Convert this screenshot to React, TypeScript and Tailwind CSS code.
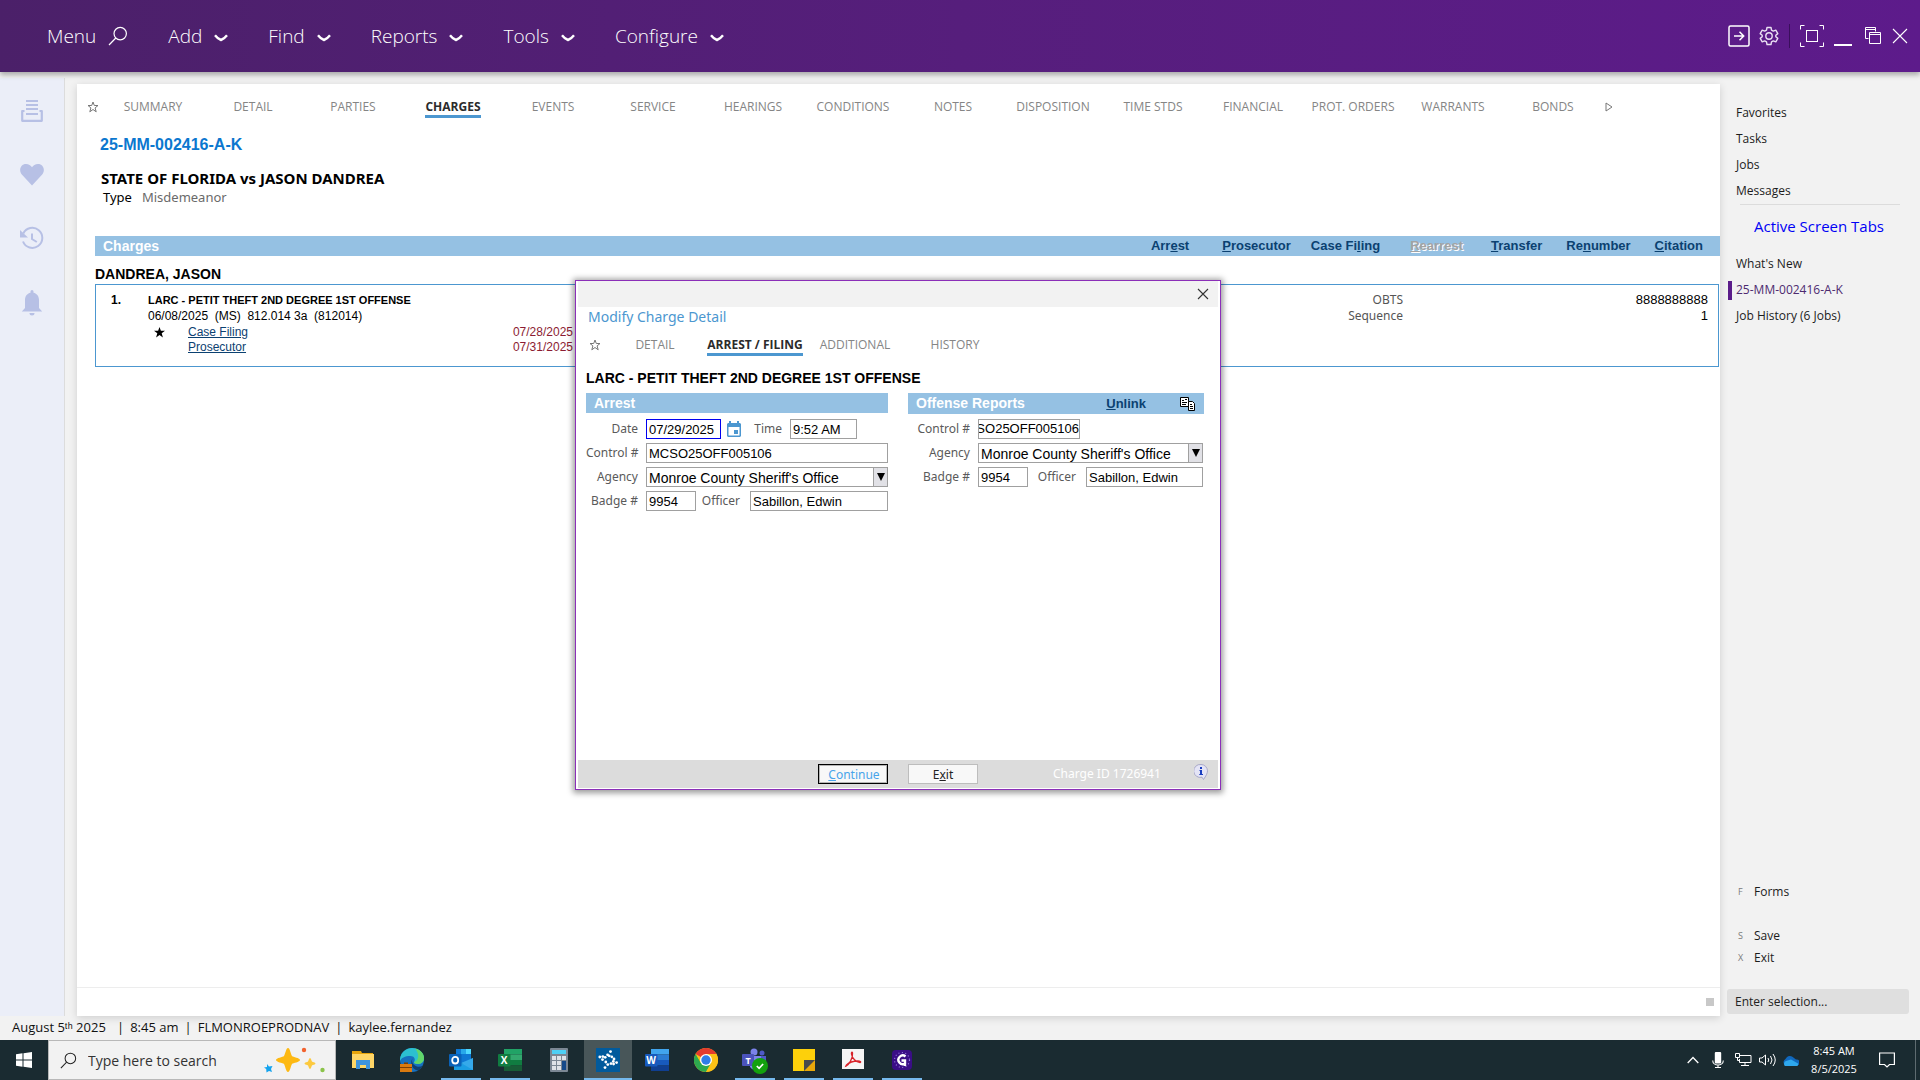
import React from "react";

const ui = "font-['Open_Sans',sans-serif]";
const arial = "font-['Liberation_Sans',sans-serif]";
const tahoma = "font-['Noto_Sans',sans-serif]";

const menus = ["Add", "Find", "Reports", "Tools", "Configure"];
const caseTabs = [
  "SUMMARY", "DETAIL", "PARTIES", "CHARGES", "EVENTS", "SERVICE", "HEARINGS", "CONDITIONS",
  "NOTES", "DISPOSITION", "TIME STDS", "FINANCIAL", "PROT. ORDERS", "WARRANTS", "BONDS",
];
const dialogTabs = ["DETAIL", "ARREST / FILING", "ADDITIONAL", "HISTORY"];

function Magnifier({ className }: { className: string }) {
  return (
    <svg viewBox="0 0 20 20" className={className} fill="none" stroke="currentColor" strokeWidth="1.2">
      <circle cx="12.2" cy="7.6" r="6.2" />
      <path d="M7.8 12 1 19" />
    </svg>
  );
}

function StarOutline() {
  return (
    <svg viewBox="0 0 12 12" className="h-3 w-3" fill="none" stroke="#777" strokeWidth="1">
      <path d="M6 1 7.3 4.5H11L8.1 6.9 9.2 10.8 6 8.5 2.8 10.8 3.9 6.9 1 4.5H4.7Z" />
    </svg>
  );
}

function Tabs({ items, active, label }: { items: string[]; active: string; label: string }) {
  return (
    <nav aria-label={label} className={`flex items-start ${ui} text-[12px] leading-[17px]`}>
      {items.map((t) => (
        <button key={t} type="button" className="flex w-[100px] justify-center whitespace-nowrap">
          {t === active ? (
            <span className="border-b-[3px] border-[#4c97d0] font-bold text-[#2b2b2b]">{t}</span>
          ) : (
            <span className="text-[#858585]">{t}</span>
          )}
        </button>
      ))}
    </nav>
  );
}

function Header() {
  return (
    <header className={`relative z-10 flex h-[72px] items-center justify-between bg-linear-to-r from-[#4b2069] via-[#561e7c] to-[#5d1b8b] pl-[47px] pr-3 text-white shadow-[0_3px_5px_rgba(0,0,0,0.3)] ${ui}`}>
      <nav className="flex items-center gap-10 text-[19px] font-light leading-[26px]">
        <button type="button" className="flex items-center gap-3">
          Menu
          <Magnifier className="h-5 w-5" />
        </button>
        {menus.map((m) => (
          <button key={m} type="button" className="flex items-center gap-3">
            {m}
            <svg viewBox="0 0 14 8" className="mt-1 h-2 w-[14px]" fill="none" stroke="#fff" strokeWidth="2.4">
              <path d="M1 1.2Q4 5 7 6Q10 5 13 1.2" />
            </svg>
          </button>
        ))}
      </nav>
      <div className="flex items-center">
        <button type="button" aria-label="Sign out">
          <svg viewBox="0 0 24 24" className="h-6 w-6" fill="none" stroke="#fff" strokeWidth="1.5">
            <rect x="2" y="2" width="20" height="20" rx="1.5" />
            <path d="M7 12h9.5M12.5 7.8l4.2 4.2-4.2 4.2" />
          </svg>
        </button>
        <button type="button" aria-label="Settings" className="ml-2">
          <svg viewBox="0 0 20 20" className="h-5 w-5" fill="none" stroke="#e9dff2" strokeWidth="1.4" strokeLinejoin="round">
            <path d="M8 1.5h4l.5 2.6 1.8 1 2.5-.9 2 3.4-2 1.7v1.4l2 1.7-2 3.4-2.5-.9-1.8 1-.5 2.6H8l-.5-2.6-1.8-1-2.5.9-2-3.4 2-1.7V9.3l-2-1.7 2-3.4 2.5.9 1.8-1Z" />
            <circle cx="10" cy="10" r="3.2" />
          </svg>
        </button>
        <span className="ml-2.5 h-6 w-px bg-[#3a0f5c]" />
        <button type="button" aria-label="Full screen" className="ml-2.5">
          <svg viewBox="0 0 24 22" className="h-[22px] w-6" fill="none" stroke="#fff" strokeWidth="1">
            <path d="M.5 4.5v-4h4M19.5.5h4v4M23.5 17.5v4h-4M4.5 21.5h-4v-4" />
            <rect x="6.5" y="5.5" width="11" height="11" />
          </svg>
        </button>
        <button type="button" aria-label="Minimize" className="ml-2.5 flex h-5 w-[18px] items-end">
          <span className="h-0.5 w-full bg-white" />
        </button>
        <button type="button" aria-label="Restore" className="ml-3">
          <svg viewBox="0 0 18 18" className="h-[18px] w-[18px]" fill="none" stroke="#fff" strokeWidth="1">
            <path d="M4.5 11.5H1.5v-11h10v4M1.5 2.5h10" />
            <path d="M5.5 5.5h11v11h-11ZM5.5 7.5h11" />
          </svg>
        </button>
        <button type="button" aria-label="Close" className="ml-2.5">
          <svg viewBox="0 0 16 16" className="h-4 w-4" fill="none" stroke="#fff" strokeWidth="1.1">
            <path d="M1 1l14 14M15 1 1 15" />
          </svg>
        </button>
      </div>
    </header>
  );
}

function Rail() {
  return (
    <aside className="mt-1.5 flex w-[65px] shrink-0 flex-col items-center gap-10 border-r border-[#dcdcdc] bg-[#ebeef8] pt-5 text-[#b7c0e5]">
      <button type="button" aria-label="Documents">
        <svg viewBox="0 0 24 24" className="h-6 w-6" fill="none" stroke="currentColor">
          <path d="M6 3h12M6 7h12M6 11h12M6 16h12" strokeWidth="2" />
          <path d="M4.5 13H2.2v9.8h19.6V13h-2.3" strokeWidth="2.2" strokeLinejoin="round" />
        </svg>
      </button>
      <button type="button" aria-label="Favorites">
        <svg viewBox="0 0 24 24" className="h-6 w-6" fill="currentColor">
          <path d="M12 23.5 1.8 12.6C-1.7 8 .7 2 6 2c2.7 0 4.8 1.4 6 3.3C13.2 3.4 15.3 2 18 2c5.3 0 7.7 6 4.2 10.6Z" />
        </svg>
      </button>
      <button type="button" aria-label="History">
        <svg viewBox="0 0 24 24" className="h-6 w-6" fill="none" stroke="currentColor" strokeWidth="2">
          <path d="M3 15.5A10 10 0 1 0 3.3 7.5" />
          <path d="M0 4v7.5h8Z" fill="currentColor" stroke="none" />
          <path d="M12 7.5v5.5l4.8 3" />
        </svg>
      </button>
      <button type="button" aria-label="Notifications">
        <svg viewBox="0 0 24 26" className="h-[26px] w-6" fill="currentColor">
          <path d="M10.5 1.5a1.5 1.5 0 0 1 3 0v1.3c3.5.7 5.5 3.7 5.5 7.2v8l3.2 3.5H1.8L5 18v-8c0-3.5 2-6.5 5.5-7.2ZM9.5 23h5a2.5 2.5 0 0 1-5 0Z" />
        </svg>
      </button>
    </aside>
  );
}

function ChargesBar() {
  const link = "whitespace-nowrap";
  return (
    <div className={`flex h-5 items-center bg-[#95c1e3] pl-2 pr-[17px] ${arial} font-bold text-[#0b4171]`}>
      <h2 className="mr-auto text-[14px] text-white">Charges</h2>
      <div className="flex text-[13px] leading-5">
        <button type="button" className={link}>Arr<u>e</u>st</button>
        <button type="button" className={`ml-[33px] ${link}`}><u>P</u>rosecutor</button>
        <button type="button" className={`ml-5 ${link}`}>Case Fi<u>l</u>ing</button>
        <button type="button" disabled className={`ml-[30px] text-[#a3a3a3] [text-shadow:1px_1px_0_#fff] ${link}`}><u>R</u>earrest</button>
        <button type="button" className={`ml-7 ${link}`}><u>T</u>ransfer</button>
        <button type="button" className={`ml-6 ${link}`}>Re<u>n</u>umber</button>
        <button type="button" className={`ml-6 ${link}`}><u>C</u>itation</button>
      </div>
    </div>
  );
}

function ChargeRow() {
  return (
    <section className={`mr-px flex h-[83px] border border-[#4c97d0] pl-[15px] pr-[10px] pt-[7px] ${arial} text-[12px] leading-4 text-black`}>
      <span className="w-[37px] shrink-0 font-bold">1.</span>
      <div className="w-[425px] shrink-0">
        <h3 className="text-[11px] font-bold whitespace-nowrap">LARC - PETIT THEFT 2ND DEGREE 1ST OFFENSE</h3>
        <p className="mb-px whitespace-pre">06/08/2025  (MS)  812.014 3a  (812014)</p>
        <div className="flex leading-[15px]">
          <span className="w-10 pl-1.5">
            <svg viewBox="0 0 12 12" className="mt-0.5 h-[11px] w-[11px]">
              <path d="M6 0 7.5 4.2H12L8.4 6.9 9.7 11.5 6 8.8 2.3 11.5 3.6 6.9 0 4.2H4.5Z" />
            </svg>
          </span>
          <a href="#case-filing" className="text-[#0b4171] underline">Case Filing</a>
          <span className="ml-auto text-[#8c1c32]">07/28/2025</span>
        </div>
        <div className="flex pl-10 leading-[15px]">
          <a href="#prosecutor" className="text-[#0b4171] underline">Prosecutor</a>
          <span className="ml-auto text-[#8c1c32]">07/31/2025</span>
        </div>
      </div>
      <dl className="ml-auto grid grid-cols-[auto_305px] content-start text-right">
        <dt className={`${tahoma} text-[#555]`}>OBTS</dt>
        <dd className="text-[13px]">8888888888</dd>
        <dt className={`${tahoma} text-[#555]`}>Sequence</dt>
        <dd className="text-[13px]">1</dd>
      </dl>
    </section>
  );
}

const box = `h-5 border border-[#a0a0a0] bg-white px-0.5 text-[13px] text-black ${arial} outline-none`;
const lab = `${tahoma} text-[12px] text-[#5a5a5a] text-right whitespace-nowrap`;

function AgencySelect({ id }: { id: string }) {
  return (
    <div className="relative flex w-full">
      <select id={id} className={`h-5 w-full appearance-none border border-[#a0a0a0] bg-white px-0.5 text-[14px] text-black outline-none ${arial}`} defaultValue="m">
        <option value="m">Monroe County Sheriff's Office</option>
      </select>
      <span className="pointer-events-none absolute inset-y-px right-px flex w-[14px] items-center justify-center border-l border-[#a0a0a0] bg-[#e1e1e6]">
        <svg viewBox="0 0 8 8" className="h-2 w-2"><path d="M0 0h8L4 8Z" /></svg>
      </span>
    </div>
  );
}

function ArrestForm() {
  return (
    <section className="w-[302px]">
      <h3 className={`h-5 bg-[#95c1e3] pl-2 text-[14px] font-bold leading-5 text-white ${arial}`}>Arrest</h3>
      <div className="mt-1.5 grid grid-cols-[52px_242px] items-center gap-x-2 gap-y-1">
        <label htmlFor="date" className={lab}>Date</label>
        <div className="flex items-center">
          <input id="date" className={`h-5 w-[75px] border border-[#0000f0] bg-white px-0.5 text-[13px] text-black outline-none ${arial}`} defaultValue="07/29/2025" />
          <button type="button" aria-label="Pick date" className="ml-1.5">
            <svg viewBox="0 0 14 16" className="h-4 w-[14px]">
              <path d="M2 0h2v2h6V0h2v2h1l1 1v12l-1 1H1l-1-1V3l1-1h1Z" fill="#4c97d0" />
              <path d="M1.5 6h11v8.5h-11Z" fill="#fff" />
              <path d="M7 9h4v4H7Z" fill="#4c97d0" />
            </svg>
          </button>
          <label htmlFor="time" className={`mr-2 ml-auto ${lab}`}>Time</label>
          <input id="time" className={`${box} mr-[31px] w-[67px]`} defaultValue="9:52 AM" />
        </div>
        <label htmlFor="ctl" className={lab}>Control #</label>
        <input id="ctl" className={box} defaultValue="MCSO25OFF005106" />
        <label htmlFor="agency" className={lab}>Agency</label>
        <AgencySelect id="agency" />
        <label htmlFor="badge" className={lab}>Badge #</label>
        <div className="flex items-center">
          <input id="badge" className={`${box} w-[50px]`} defaultValue="9954" />
          <label htmlFor="officer" className={`ml-auto mr-2.5 ${lab}`}>Officer</label>
          <input id="officer" className={`${box} w-[138px]`} defaultValue="Sabillon, Edwin" />
        </div>
      </div>
    </section>
  );
}

function OffenseForm() {
  return (
    <section className="w-[296px]">
      <div className={`flex h-[21px] items-center bg-[#95c1e3] pl-2 pr-2 font-bold ${arial}`}>
        <h3 className="mr-auto text-[14px] text-white">Offense Reports</h3>
        <button type="button" className="mr-[34px] text-[13px] text-[#0b4171]"><u>U</u>nlink</button>
        <button type="button" aria-label="Copy">
          <svg viewBox="0 0 16 16" className="h-4 w-4" fill="#fff" stroke="#000" strokeWidth="1">
            <path d="M.5 1.5h8v9h-8Z" />
            <path d="M2 4.5h2M5 3.5h2M2 6.5h5M2 8.5h4" />
            <path d="M8.5 5.5h4l2 2v7h-6Z" />
            <path d="M10 8.5h2M10 10.5h3M10 12.5h3" />
          </svg>
        </button>
      </div>
      <div className="mt-[5px] grid grid-cols-[62px_225px] items-center gap-x-2 gap-y-1">
        <label htmlFor="octl" className={lab}>Control #</label>
        <div className="flex h-5 w-[102px] justify-end overflow-hidden border border-[#a0a0a0]">
          <input id="octl" className={`w-[128px] shrink-0 bg-white text-right text-[13px] leading-[18px] text-black outline-none ${arial}`} defaultValue="MCSO25OFF005106" />
        </div>
        <label htmlFor="oagency" className={lab}>Agency</label>
        <AgencySelect id="oagency" />
        <label htmlFor="obadge" className={lab}>Badge #</label>
        <div className="flex items-center">
          <input id="obadge" className={`${box} w-[50px]`} defaultValue="9954" />
          <label htmlFor="oofficer" className={`ml-auto mr-2.5 ${lab}`}>Officer</label>
          <input id="oofficer" className={`${box} w-[117px]`} defaultValue="Sabillon, Edwin" />
        </div>
      </div>
    </section>
  );
}

function ChargeDialog() {
  return (
    <div role="dialog" aria-label="Modify Charge Detail" className="absolute left-[498px] top-[196px] flex h-[510px] w-[646px] flex-col border border-[#8b2fb8] bg-white px-0.5 pb-px shadow-[0_1px_6px_2px_rgba(0,0,0,0.4)]">
      <div className="flex h-[26px] shrink-0 items-center justify-end bg-[#f2f2f2] pr-[9px]">
        <button type="button" aria-label="Close dialog">
          <svg viewBox="0 0 12 12" className="h-3 w-3" stroke="#333" strokeWidth="1.1"><path d="M1 1l10 10M11 1 1 11" /></svg>
        </button>
      </div>
      <h2 className={`pl-[10px] text-[14px] leading-[19px] text-[#4c97d0] ${tahoma}`}>Modify Charge Detail</h2>
      <div className="mt-[10px] flex pl-[11px]">
        <span className="flex w-4 pt-[3px]"><StarOutline /></span>
        <Tabs items={dialogTabs} active="ARREST / FILING" label="Charge sections" />
      </div>
      <h3 className={`mt-[13px] pl-2 text-[14px] font-bold leading-[18px] text-black ${arial}`}>LARC - PETIT THEFT 2ND DEGREE 1ST OFFENSE</h3>
      <div className="mt-1.5 flex items-start gap-5 pl-2">
        <ArrestForm />
        <OffenseForm />
      </div>
      <footer className={`mt-auto flex h-7 shrink-0 items-center justify-end bg-[#dcdcdc] pr-[10px] text-[12px] ${tahoma}`}>
        <button type="button" className="h-5 w-[70px] border border-black bg-[#f8f8f8] pt-0.5 pl-0.5 leading-4 text-[#48a4ea] outline-1 -outline-offset-2 outline-[#b5b5b5]"><u>C</u>ontinue</button>
        <button type="button" className="ml-5 h-5 w-[70px] border border-[#bdbdbd] bg-[#f8f8f8] pt-px leading-4 text-[#222]">E<u>x</u>it</button>
        <span className="ml-[75px] w-[105px] whitespace-nowrap text-white">Charge ID 1726941</span>
        <svg viewBox="0 0 14 16" className="ml-9 mb-1 h-4 w-[14px]">
          <path d="M7 .5a6.5 6.5 0 0 1 6.5 6.3c0 2.7-1.5 5-4 8.7L8 13.2A6.5 6.5 0 1 1 7 .5Z" fill="#e4e4f6" stroke="#a9a9c8" />
          <path d="M6 3h2v2H6ZM5.5 6H8v4h1v1H5.3v-1H6V7h-.5Z" fill="#1a3ec0" />
        </svg>
      </footer>
    </div>
  );
}

function CasePanel() {
  return (
    <main className="relative ml-3 mt-3 flex min-w-0 flex-1 flex-col bg-white shadow-[0_2px_8px_rgba(0,0,0,0.15)]">
      <div className="flex pl-[10px] pt-[14px]">
        <span className="flex w-4 pt-[3px]"><StarOutline /></span>
        <Tabs items={caseTabs} active="CHARGES" label="Case sections" />
        <button type="button" aria-label="More tabs" className="ml-0.5 flex h-[17px] items-center">
          <svg viewBox="0 0 8 10" className="h-[10px] w-2" fill="none" stroke="#777"><path d="M1 1v8l6-4Z" /></svg>
        </button>
      </div>
      <h1 className={`mt-[17px] pl-[23px] text-[16px] font-bold leading-5 text-[#0b77cf] ${arial}`}>25-MM-002416-A-K</h1>
      <p className={`mt-[13px] pl-6 text-[15px] font-bold leading-5 text-black ${tahoma}`}>STATE OF FLORIDA vs JASON DANDREA</p>
      <p className={`flex gap-2.5 pl-[26px] text-[13px] leading-[18px] text-black ${tahoma}`}>Type <span className="text-[#6a6a6a]">Misdemeanor</span></p>
      <div className="mt-[30px] pl-[18px]">
        <ChargesBar />
        <h3 className={`mt-[9px] text-[14px] font-bold leading-[18px] text-black ${arial}`}>DANDREA, JASON</h3>
        <div className="mt-px"><ChargeRow /></div>
      </div>
      <div className="mt-auto flex h-[29px] items-center justify-end border-t border-[#ededed] pr-1.5">
        <span className="h-2 w-2 bg-[#c8c8c8]" />
      </div>
      <ChargeDialog />
    </main>
  );
}

function Side() {
  const row = "block leading-[26px] text-left";
  return (
    <aside className={`flex w-[200px] shrink-0 flex-col pt-7 text-[12px] text-[#1c1c1c] ${ui}`}>
      <nav className="pl-4">
        {["Favorites", "Tasks", "Jobs", "Messages"].map((t) => (
          <button key={t} type="button" className={row}>{t}</button>
        ))}
      </nav>
      <div className="ml-5 mr-5 border-t border-[#dcdcdc]" />
      <h2 className="mt-[10px] pl-[34px] text-[15px] leading-[22px] text-[#0000f5]">Active Screen Tabs</h2>
      <nav className="mt-[14px] pl-2">
        <button type="button" className={`${row} pl-2`}>What's New</button>
        <button type="button" className="flex h-[26px] items-center text-[#4d2a70]">
          <span className="mr-1 h-[19px] w-1 bg-[#5b1c8a]" />25-MM-002416-A-K
        </button>
        <button type="button" className={`${row} pl-2`}>Job History (6 Jobs)</button>
      </nav>
      <div className="mt-auto pl-[18px] leading-[22px]">
        {[["F", "Forms", "mb-[22px]"], ["S", "Save", ""], ["X", "Exit", ""]].map(([k, t, m]) => (
          <button key={t} type="button" className={`flex ${m}`}>
            <span className="w-4 text-left text-[9px] text-[#7a7a7a]">{k}</span>{t}
          </button>
        ))}
      </div>
      <input aria-label="Selection" placeholder="Enter selection..." className="mt-5 ml-[7px] mb-[2px] h-[25px] w-[182px] rounded-[3px] bg-[#dfdfdf] px-2 text-[12px] text-[#222] outline-none placeholder:text-[#222]" />
    </aside>
  );
}

function Explorer() {
  return (
    <svg viewBox="0 0 24 24" className="h-6 w-6">
      <path d="M1 3h9l1 2h11v15H1Z" fill="#e8a50c" />
      <path d="M1 6h22v14H1Z" fill="#ffd667" />
      <path d="M5 12h14v9h-4v-4H9v4H5Z" fill="#3f94dd" />
    </svg>
  );
}
function Edge() {
  return (
    <svg viewBox="0 0 24 24" className="h-6 w-6">
      <circle cx="12" cy="12" r="12" fill="#1670bf" />
      <path d="M0 11C1 4 6 0 12 0c7 0 12 5 12 10 0 4-3 6-6.5 6-2.5 0-4-1-3.5-2 2-3 0-6-3.5-6C5 8 1 10 0 13Z" fill="#2cc0d0" />
      <path d="M15 .5c6 1.5 9 5.500 9 9.5 0 4-3 6-6.500 6-2 0-3.500-.7-3.500-1.700C20 12 19 5 15 .5Z" fill="#62d66a" />
      <path d="M13 10c-2 2-1 7 4 8.5 2 .5 4 0 5.500-.7-1 2-3 4-5 4.700-6-1-8-9-4.500-12.500Z" fill="#123f70" />
      <path d="M0 16h12v8H0Z" fill="#d97a10" />
      <path d="M0 19h12v1H0ZM4 14.500h4v1.500H4Z" fill="#7a3d05" />
    </svg>
  );
}
function Office({ letter, tile, rows }: { letter: string; tile: string; rows: string[] }) {
  return (
    <svg viewBox="0 0 24 24" className="h-6 w-6">
      {rows.map((fill, i) => (
        <rect key={fill} x="6" y={1 + i * 5.5} width="18" height="5.5" fill={fill} />
      ))}
      <rect x="0" y="6" width="12.5" height="12.5" rx="1" fill={tile} />
      <text x="6.2" y="16" textAnchor="middle" fontSize="10" fontWeight="700" fill="#fff" fontFamily="Open Sans">{letter}</text>
    </svg>
  );
}
function Outlook() {
  return (
    <svg viewBox="0 0 24 24" className="h-6 w-6">
      <path d="M7 1h15v14H7Z" fill="#0f78d4" />
      <path d="M12 1h5v5h-5Z" fill="#28a8ea" />
      <path d="M17 1h5v5h-5Z" fill="#50d9ff" />
      <path d="M5 10l9 6 10-6v12H5Z" fill="#1b9de2" />
      <path d="M24 10v12L12 15Z" fill="#35a9ea" />
      <rect x="0" y="6" width="12.5" height="12.5" rx="1" fill="#0a62b8" />
      <ellipse cx="6.2" cy="12.2" rx="3" ry="3.3" fill="none" stroke="#fff" strokeWidth="1.8" />
    </svg>
  );
}
function Calculator() {
  return (
    <svg viewBox="0 0 24 24" className="h-6 w-6">
      <rect x="3" y="0" width="18" height="24" rx="1" fill="#7b8794" />
      <path d="M5 2h14v4H5Z" fill="#4ed0f5" />
      <path d="M5 8h4v4H5Zm5 0h4v4h-4Zm5 0h4v4h-4ZM5 13h4v4H5Zm5 0h4v4h-4ZM5 18h4v4H5Zm5 0h4v4h-4Z" fill="#dfe3e8" />
      <path d="M15 13h4v9h-4Z" fill="#164a8a" />
    </svg>
  );
}
function CaseApp() {
  const dots = [
    [14.5, 3.6], [11.6, 6.8], [9.2, 9.3], [6.5, 11.6], [3.8, 9], [9.8, 14], [11.8, 16.6],
    [9, 19.6], [15, 15.6], [17.3, 13.4], [20.6, 14.6], [18, 11], [15.8, 8.8], [13.2, 7.8], [6.8, 8.6], [17.6, 16],
  ];
  return (
    <svg viewBox="0 0 24 24" className="h-6 w-6">
      <path d="M0 0h24v24H0Z" fill="#015a9c" />
      {dots.map(([x, y]) => (
        <circle key={`${x}-${y}`} cx={x} cy={y} r="1.4" fill="#fff" />
      ))}
    </svg>
  );
}
function Chrome() {
  return (
    <svg viewBox="0 0 24 24" className="h-6 w-6">
      <circle cx="12" cy="12" r="12" fill="#fbc116" />
      <path d="M12 12 1.6 6A12 12 0 0 1 22.4 6Z" fill="#e33b2e" />
      <path d="M1.6 6A12 12 0 0 0 12 24l5.2-9L12 12 6.8 15Z" fill="#2da94f" />
      <path d="M12 6h10.4a12 12 0 0 1-10.4 18l5.2-9Z" fill="#fbc116" />
      <circle cx="12" cy="12" r="6" fill="#fff" />
      <circle cx="12" cy="12" r="4.7" fill="#2f7de9" />
    </svg>
  );
}
function Teams() {
  return (
    <svg viewBox="0 0 26 26" className="h-[26px] w-[26px]">
      <circle cx="12" cy="4" r="3.5" fill="#7b83eb" /><circle cx="20" cy="5" r="2.5" fill="#5059c9" />
      <path d="M8 8h11v9a6 6 0 0 1-11 2Z" fill="#7b83eb" /><path d="M19 8h5v6h-5Z" fill="#5059c9" />
      <rect x="0" y="6" width="12" height="12" rx="1" fill="#4b53bc" />
      <text x="6" y="15.5" textAnchor="middle" fontSize="9" fontWeight="700" fill="#fff" fontFamily="Open Sans">T</text>
      <circle cx="18" cy="18" r="8" fill="#13a10e" />
      <path d="M14.8 18l2.3 2.3 4-4.3" fill="none" stroke="#fff" strokeWidth="1.7" />
    </svg>
  );
}
function Notes() {
  return (
    <svg viewBox="0 0 24 24" className="h-6 w-6">
      <path d="M1 1h22v11L12 23H1Z" fill="#fdd00b" /><path d="M12 12h11v11H12Z" fill="#e8a70a" />
      <path d="M12 12h11L12 23Z" fill="#47484c" />
    </svg>
  );
}
function Acrobat() {
  return (
    <svg viewBox="0 0 24 24" className="h-6 w-6">
      <path d="M1 1h22v20H1Z" fill="#f5f5f5" />
      <path d="M5 18C8 17 12 10 11.5 5c-.3-1.5-1.3-1-1 1C11 10 15 14.5 19 14.5c1.5-.5 0-1.5-2-1.5-4 0-9 1.5-11.5 4Z" fill="none" stroke="#d8232a" strokeWidth="1.4" />
    </svg>
  );
}
function GApp() {
  return (
    <svg viewBox="0 0 24 24" className="h-6 w-6">
      <rect x="2" y="2" width="20" height="20" rx="4" fill="#3a0e86" />
      <circle cx="12" cy="12" r="7.5" fill="none" stroke="#9a7ae0" strokeWidth="1.2" strokeDasharray="1 2.5" />
      <path d="M15.5 8.5A4.3 4.3 0 1 0 15 15.5v-3h-3.5M15 15v3" fill="none" stroke="#fff" strokeWidth="2.4" />
    </svg>
  );
}

const excelRows = ["#21a366", "#33a86e", "#107c41", "#185c37"];
const wordRows = ["#41a5ee", "#2b7cd3", "#185abd", "#103f91"];

function Taskbar() {
  const apps: { name: string; icon: React.ReactNode; run: boolean; on?: boolean }[] = [
    { name: "Explorer", icon: <Explorer />, run: false },
    { name: "Edge", icon: <Edge />, run: false },
    { name: "Outlook", icon: <Outlook />, run: true },
    { name: "Excel", icon: <Office letter="X" tile="#107c41" rows={excelRows} />, run: true },
    { name: "Calculator", icon: <Calculator />, run: false },
    { name: "Case manager", icon: <CaseApp />, run: true, on: true },
    { name: "Word", icon: <Office letter="W" tile="#185abd" rows={wordRows} />, run: false },
    { name: "Chrome", icon: <Chrome />, run: false },
    { name: "Teams", icon: <Teams />, run: true },
    { name: "Sticky Notes", icon: <Notes />, run: true },
    { name: "Acrobat", icon: <Acrobat />, run: true },
    { name: "G", icon: <GApp />, run: true },
  ];
  return (
    <footer className={`flex h-10 items-center bg-[#1a2b31] text-white ${ui}`}>
      <button type="button" aria-label="Start" className="flex w-12 justify-center">
        <svg viewBox="0 0 16 16" className="h-4 w-4" fill="#fff"><path d="M0 2.2 6.5 1.3V7.5H0ZM7.5 1.2 16 0v7.5H7.5ZM0 8.5h6.5v6.2L0 13.8ZM7.5 8.5H16V16L7.5 14.8Z" /></svg>
      </button>
      <label className="flex h-10 w-[288px] items-center border border-[#b8b8b8] bg-[#f2f2f2] pl-[11px] pr-2 text-[#222]">
        <Magnifier className="h-[17px] w-[17px]" />
        <input aria-label="Search" placeholder="Type here to search" className="ml-[11px] w-40 bg-transparent text-[14px] outline-none placeholder:text-[#333]" />
        <svg viewBox="0 0 64 28" className="ml-auto h-7 w-16">
          <path d="M25 2c2 0 3 7 4 8s8 2 8 4-7 3-8 4-2 8-4 8-3-7-4-8-8-2-8-4 7-3 8-4 2-8 4-8Z" fill="#fdb913" />
          <path d="M47 12c1 0 1.5 3 2 3.5s3.5 1 3.5 2-3 1.5-3.5 2-1 3.5-2 3.5-1.5-3-2-3.5-3.5-1-3.5-2 3-1.5 3.5-2 1-3.5 2-3.5Z" fill="#fcc93f" />
          <path d="M4 18l2 2.5 3.5-.5-1.5 3 1 3-3-1-2.5 1.5L3.2 23 1 21.5l3-.5Z" fill="#14a3ee" />
          <circle cx="41" cy="4" r="2.2" fill="#f2622e" /><circle cx="59.5" cy="24" r="2.2" fill="#8bc34a" />
        </svg>
      </label>
      <div className="ml-[3px] flex h-10 gap-px">
        {apps.map((a) => (
          <button key={a.name} type="button" aria-label={a.name} className={a.on ? "flex w-12 flex-col items-center bg-[#485659] pt-2" : "flex w-12 flex-col items-center pt-2"}>
            <span className="flex h-[30px] items-start">{a.icon}</span>
            {a.run && <span className={a.on ? "h-0.5 w-12 bg-[#76b9ed]" : "h-0.5 w-10 bg-[#76b9ed]"} />}
          </button>
        ))}
      </div>
      <div className="ml-auto flex items-center">
        <svg viewBox="0 0 12 8" className="h-2 w-3" fill="none" stroke="#fff" strokeWidth="1.3"><path d="M.7 7 6 1.5 11.3 7" /></svg>
        <svg viewBox="0 0 12 16" className="ml-[13px] h-4 w-3" fill="#fff"><rect x="2.8" y="0" width="6.4" height="11.5" rx="1" /><path d="M.7 8.5c0 6 10.6 6 10.6 0M6 13v3M3 15.5h6" fill="none" stroke="#fff" strokeWidth="1.1" /></svg>
        <svg viewBox="0 0 17 14" className="ml-[11px] h-[14px] w-[17px]" fill="none" stroke="#fff"><path d="M5 2.5h11v7H4.5V6M10 9.5v3M6 12.5h8" /><path d="M.5.5h4v4h-4ZM2.5 4.5v3h2" /></svg>
        <svg viewBox="0 0 17 14" className="ml-[7px] h-[14px] w-[17px]" fill="none" stroke="#fff"><path d="M.5 5h2.5l3.5-3v10L3 9H.5ZM9 5q1.5 2 0 4M11.5 3q3 4 0 8M14 1q4.5 6 0 12" /></svg>
        <svg viewBox="0 0 17 11" className="ml-1.5 h-[11px] w-[17px]"><path d="M3 10a3.5 3.5 0 0 1 .5-6A5 5 0 0 1 12 3l2 1.5a3 3 0 0 1 1 6Z" fill="#1068bd" /><path d="M3 11a3 3 0 0 1 1-5l5-1.5 7 4a2 2 0 0 1-1 2.5Z" fill="#2ea8ee" /></svg>
        <time className="ml-2.5 w-[50px] text-center text-[11px] leading-[18px]">8:45 AM<br />8/5/2025</time>
        <svg viewBox="0 0 16 16" className="ml-5 h-4 w-4" fill="none" stroke="#fff" strokeWidth="1.2"><path d="M.6 1h14.8v11.5H10.5L8 15 5.5 12.5H.6Z" /></svg>
        <span className="ml-5 mr-1 h-10 w-px bg-[#5e6b70]" />
      </div>
    </footer>
  );
}

export default function App() {
  return (
    <div className="flex min-h-screen flex-col bg-[#f2f2f2]">
      <Header />
      <div className="flex flex-1">
        <Rail />
        <CasePanel />
        <Side />
      </div>
      <div className={`flex h-6 items-center gap-1.5 pl-3 text-[13px] text-[#111] ${ui}`}>
        <span className="w-[99px]">August 5ᵗʰ 2025</span><span>|</span><span>8:45 am</span><span>|</span><span>FLMONROEPRODNAV</span><span>|</span><span>kaylee.fernandez</span>
      </div>
      <Taskbar />
    </div>
  );
}
